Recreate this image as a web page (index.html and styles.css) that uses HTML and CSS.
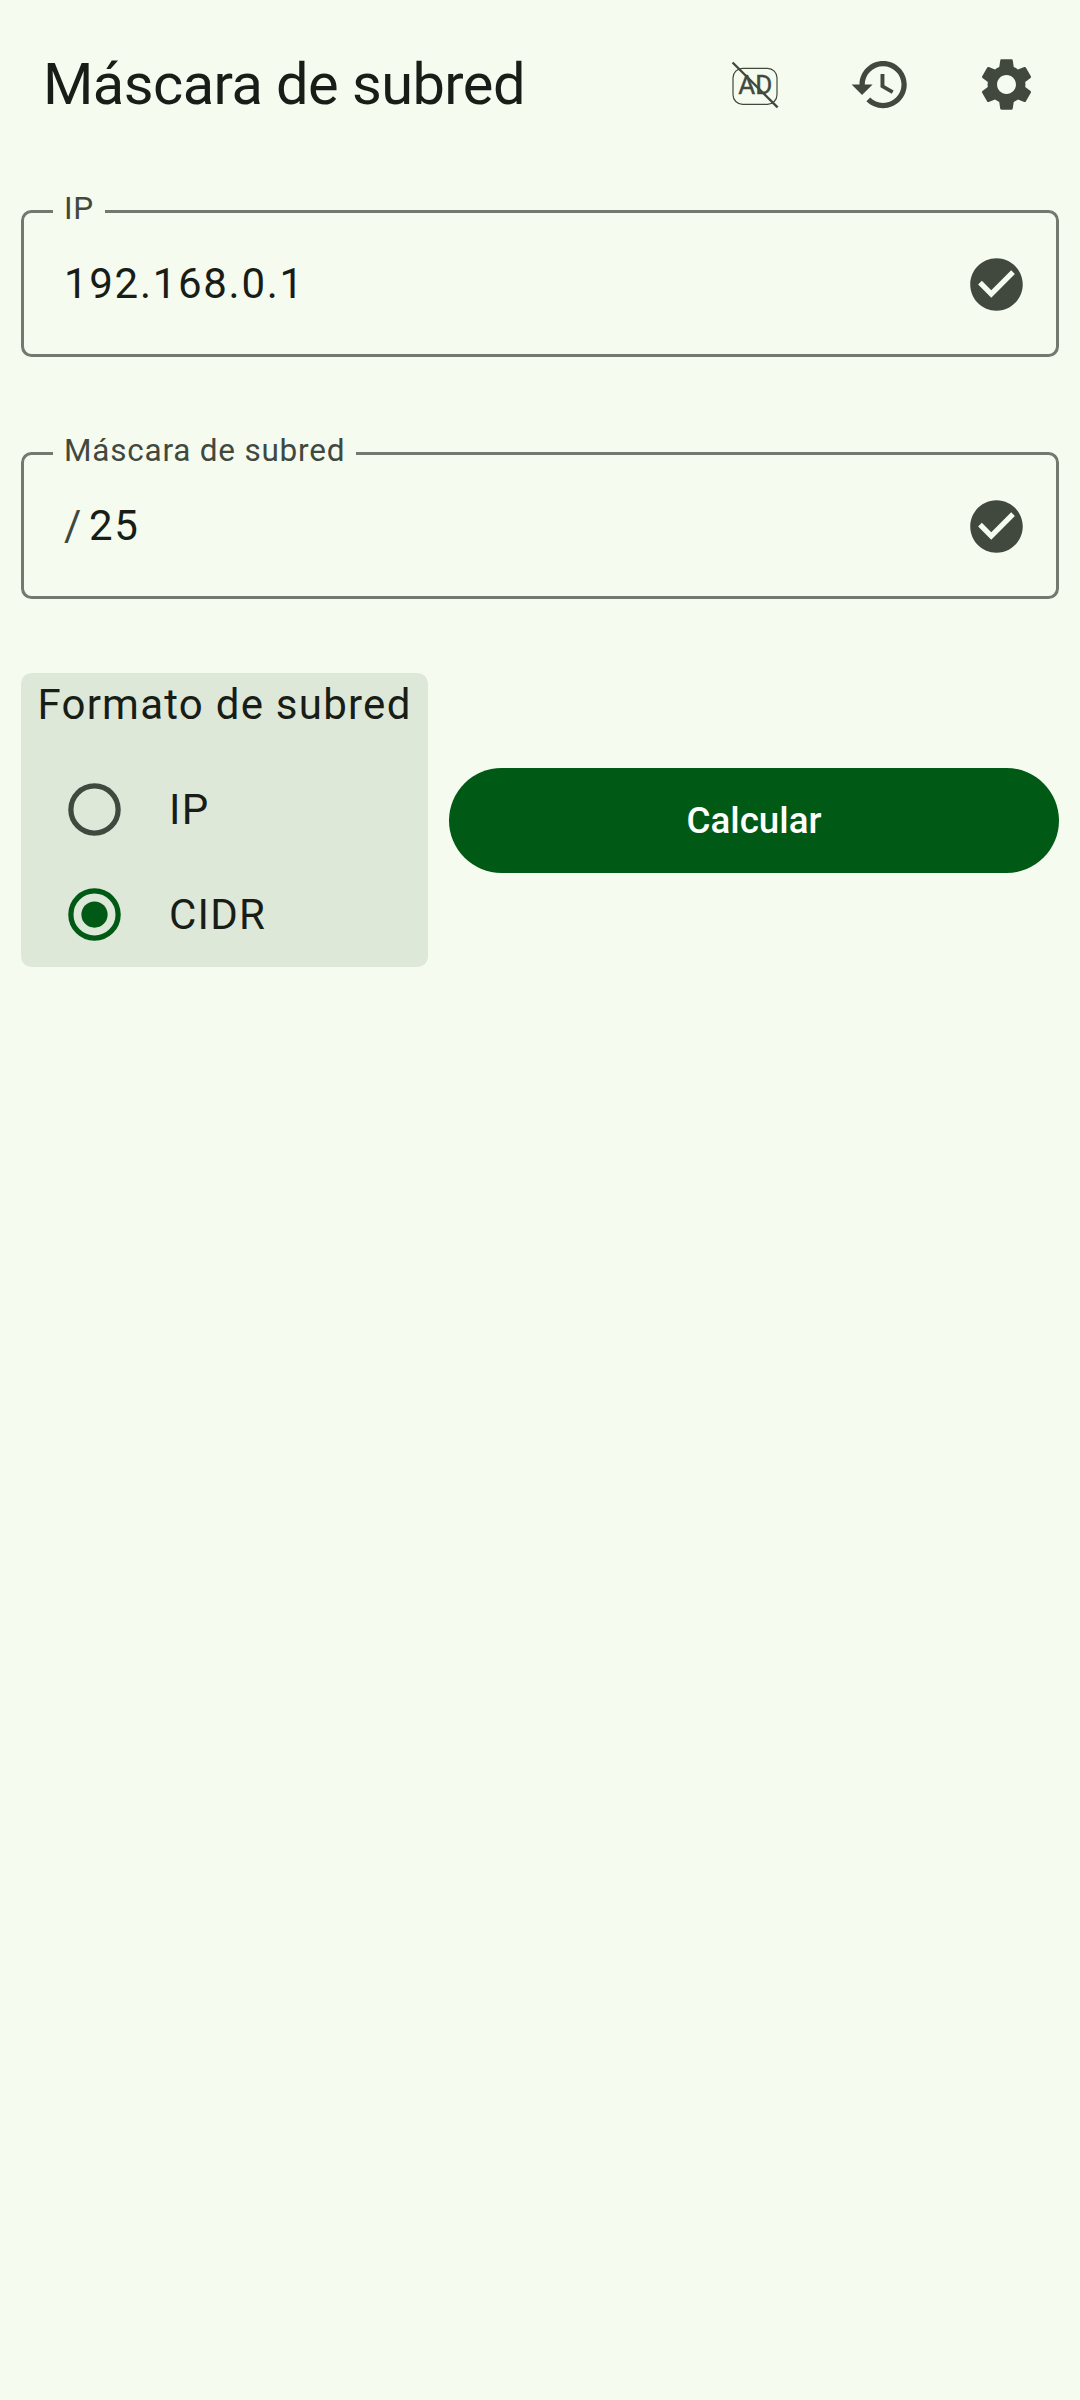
FILE: index.html
```html
<!DOCTYPE html>
<html lang="es">
<head>
  <meta charset="UTF-8" />
  <meta name="viewport" content="width=device-width, initial-scale=1.0"/>
  <title>Máscara de subred</title>
  <link rel="stylesheet" href="styles.css">
</head>
<body>

<header>
  <h1>Máscara de subred</h1>
  <nav>
    <a class="icon-btn">
      <svg class="icon" viewBox="0 0 63 63">
        <rect x="10" y="15.3" width="44" height="36" rx="9.5" fill="none" stroke="currentColor" stroke-width="1.2"/>
        <text class="ad-text" x="15.2" y="41">AD</text>
        <path d="M9.6 9.5 54.6 54.4" stroke="currentColor" stroke-width="2.4"/>
      </svg>
    </a>
    <a class="icon-btn">
      <svg class="icon" viewBox="0 0 24 24"><path d="M13 3c-4.97 0-9 4.03-9 9H1l3.89 3.89.07.14L9 12H6c0-3.87 3.13-7 7-7s7 3.13 7 7-3.13 7-7 7c-1.93 0-3.68-.79-4.94-2.06l-1.42 1.42C8.27 19.99 10.51 21 13 21c4.97 0 9-4.03 9-9s-4.03-9-9-9zm-1 5v5l4.28 2.54.72-1.21-3.5-2.08V8H12z"/></svg>
    </a>
    <a class="icon-btn">
      <svg class="icon" viewBox="0 0 24 24"><path d="M19.14 12.94c.04-.3.06-.61.06-.94 0-.32-.02-.64-.07-.94l2.03-1.58c.18-.14.23-.41.12-.61l-1.92-3.32c-.12-.22-.37-.29-.59-.22l-2.39.96c-.5-.38-1.03-.7-1.62-.94l-.36-2.54c-.04-.24-.24-.41-.48-.41h-3.84c-.24 0-.43.17-.47.41l-.36 2.54c-.59.24-1.13.57-1.62.94l-2.39-.96c-.22-.08-.47 0-.59.22L2.74 8.87c-.12.21-.08.47.12.61l2.03 1.58c-.05.3-.09.63-.09.94s.02.64.07.94l-2.03 1.58c-.18.14-.23.41-.12.61l1.92 3.32c.12.22.37.29.59.22l2.39-.96c.5.38 1.03.7 1.62.94l.36 2.54c.05.24.24.41.48.41h3.84c.24 0 .44-.17.47-.41l.36-2.54c.59-.24 1.13-.56 1.62-.94l2.39.96c.22.08.47 0 .59-.22l1.92-3.32c.12-.22.07-.47-.12-.61l-2.01-1.58zM12 15.6c-1.98 0-3.6-1.62-3.6-3.6s1.62-3.6 3.6-3.6 3.6 1.62 3.6 3.6-1.62 3.6-3.6 3.6z"/></svg>
    </a>
  </nav>
</header>

<main>
  <fieldset class="field">
    <legend>IP</legend>
    <div class="field-row">
      <span class="value">192.168.0.1</span>
      <svg class="icon" viewBox="0 0 24 24"><path d="M12 2C6.48 2 2 6.48 2 12s4.48 10 10 10 10-4.48 10-10S17.52 2 12 2zm-2 15l-5-5 1.41-1.41L10 14.17l7.59-7.59L19 8l-9 9z"/></svg>
    </div>
  </fieldset>

  <fieldset class="field">
    <legend>Máscara de subred</legend>
    <div class="field-row">
      <span class="prefix">/</span>
      <span class="value">25</span>
      <svg class="icon" viewBox="0 0 24 24"><path d="M12 2C6.48 2 2 6.48 2 12s4.48 10 10 10 10-4.48 10-10S17.52 2 12 2zm-2 15l-5-5 1.41-1.41L10 14.17l7.59-7.59L19 8l-9 9z"/></svg>
    </div>
  </fieldset>

  <div class="actions">
    <div class="format">
      <div class="format-title">Formato de subred</div>
      <div class="option">
        <svg class="radio" viewBox="0 0 24 24"><circle class="ring" cx="12" cy="12" r="9"/></svg>
        <span>IP</span>
      </div>
      <div class="option">
        <svg class="radio checked" viewBox="0 0 24 24"><circle class="ring" cx="12" cy="12" r="9"/><circle class="dot" cx="12" cy="12" r="5"/></svg>
        <span>CIDR</span>
      </div>
    </div>
    <button class="calc">Calcular</button>
  </div>
</main>

</body>
</html>
```

FILE: styles.css
```css
* { box-sizing: border-box; }
body { font-family: Roboto, sans-serif; margin: 0; min-height: 2400px; background: #f6fbf0; color: #181d17; font-size: 42px; letter-spacing: 1.25px; }

header { height: 169px; padding: 0 10.5px 0 43px; display: flex; justify-content: space-between; align-items: center; }
h1 { margin: 0; padding-bottom: 2px; font-size: 57.75px; font-weight: 400; line-height: 74px; letter-spacing: -0.55px; }
nav { display: flex; }
.icon-btn { width: 126px; height: 126px; display: flex; align-items: center; justify-content: center; color: #41493e; }
.icon { width: 63px; height: 63px; fill: #41493e; flex: none; display: block; }
.ad-text { font-size: 26px; letter-spacing: 0; stroke: #41493e; stroke-width: 0.4px; }

main { padding: 21px 21px 0; }

/* outlined text fields */
.field { margin: 0 0 75px; padding: 0; height: 167px; border: 3px solid #72796e; border-radius: 10.5px; }
.field legend { margin-left: 29px; padding: 0 10.5px 5px 11px; font-size: 31.5px; line-height: 38px; letter-spacing: 0.78px; color: #41493e; }
.field-row { height: 103px; padding: 0 28px 0 40px; display: flex; align-items: center; }
.field-row .value { flex: 1; line-height: 63px; padding-bottom: 2px; letter-spacing: 1.7px; }
.prefix { width: 25px; color: #41493e; line-height: 63px; padding-bottom: 2px; }

.actions { display: flex; align-items: center; gap: 21px; margin-top: -1px; }
.format { width: 407px; height: 294px; background: #dee8d9; border-radius: 10.5px; }
.format-title { height: 84px; line-height: 63px; text-align: center; white-space: nowrap; }
.option { height: 105px; padding-left: 42px; display: flex; align-items: center; gap: 43px; }
.radio { width: 63px; height: 63px; color: #41493e; }
.checked { color: #005914; }
.ring { fill: none; stroke: currentColor; stroke-width: 2; }
.dot { fill: currentColor; }

.calc { flex: 1; height: 105px; border: none; border-radius: 53px; background: #005914; color: #fff; font-family: inherit; font-size: 36.75px; font-weight: 500; letter-spacing: 0; }
```
